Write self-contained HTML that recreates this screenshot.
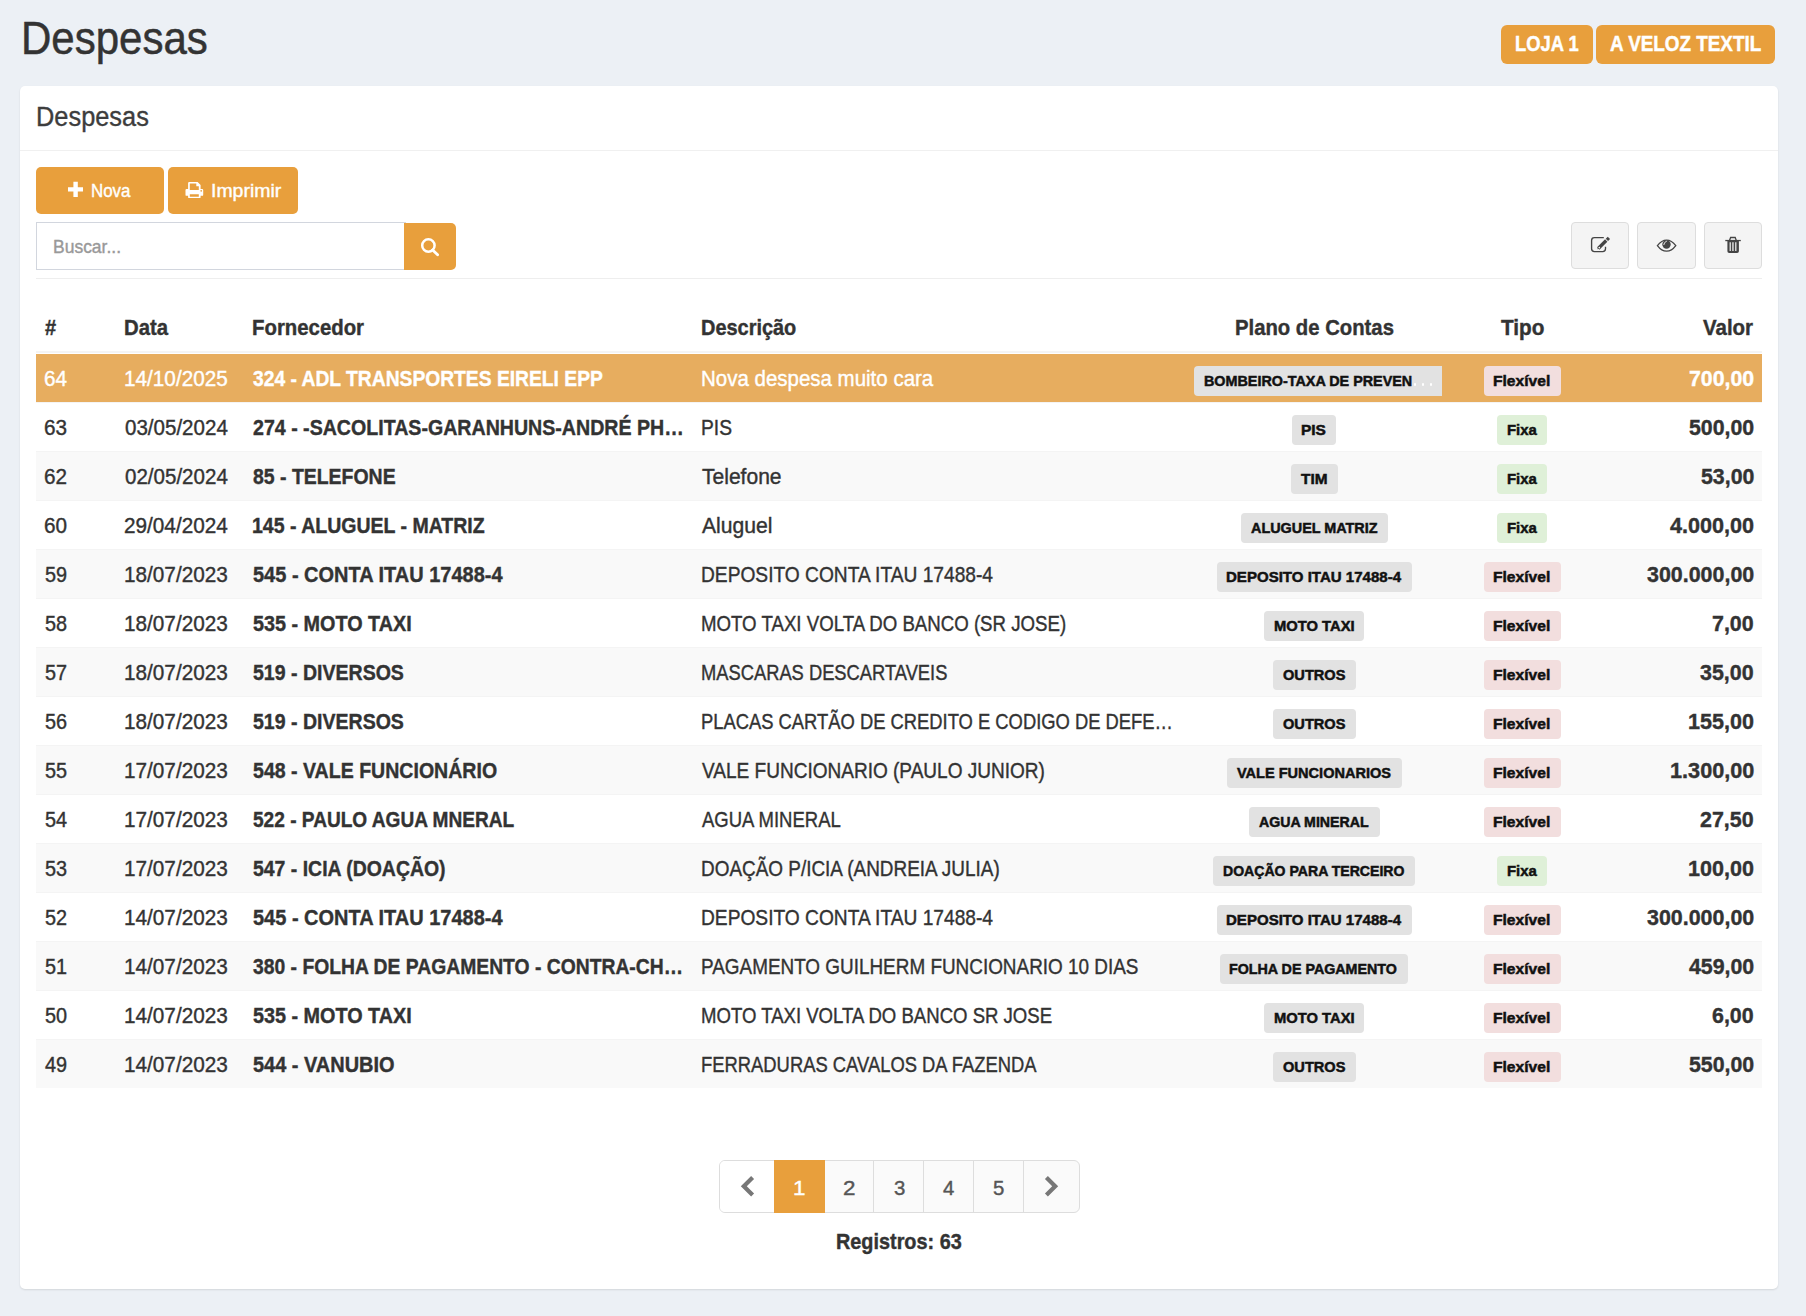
<!DOCTYPE html><html><head><meta charset="utf-8"><style>
html,body{margin:0;padding:0;}
body{width:1806px;height:1316px;background:#ecf0f5;position:relative;overflow:hidden;font-family:"Liberation Sans",sans-serif;}
.t{position:absolute;white-space:nowrap;transform-origin:0 0;}
.abs{position:absolute;}
</style></head><body>
<div class="t" style="left:20.94px;top:16.11px;font-size:45.7px;line-height:45.7px;font-weight:normal;color:#333;-webkit-text-stroke:0.5px #333;transform:scaleX(0.9196);">Despesas</div>
<div class="abs" style="left:1501px;top:25px;width:92px;height:39px;background:#e89f3c;border-radius:6px"></div>
<div class="abs" style="left:1596px;top:25px;width:179px;height:39px;background:#e89f3c;border-radius:6px"></div>
<div class="t" style="left:1515.36px;top:32.68px;font-size:22px;line-height:22px;font-weight:bold;color:#fff;-webkit-text-stroke:0.45px #fff;transform:scaleX(0.8352);">LOJA 1</div>
<div class="t" style="left:1609.60px;top:32.68px;font-size:22px;line-height:22px;font-weight:bold;color:#fff;-webkit-text-stroke:0.45px #fff;transform:scaleX(0.8570);">A VELOZ TEXTIL</div>
<div class="abs" style="left:20px;top:86px;width:1758px;height:1203px;background:#fff;border-radius:5px;box-shadow:0 1px 2px rgba(0,0,0,0.11)"></div>
<div class="abs" style="left:20px;top:150px;width:1758px;height:1px;background:#f0f0f0"></div>
<div class="t" style="left:36.32px;top:103.64px;font-size:27px;line-height:27px;font-weight:normal;color:#3d3d3d;-webkit-text-stroke:0.35px #3d3d3d;transform:scaleX(0.9399);">Despesas</div>
<div class="abs" style="left:36px;top:167px;width:128px;height:47px;background:#e89f3c;border-radius:5px"></div>
<div class="abs" style="left:168px;top:167px;width:130px;height:47px;background:#e89f3c;border-radius:5px"></div>
<svg class="abs" style="left:60px;top:175px" width="30" height="30"><path d="M13.4 6.8h4.4v5.5h5.2v4.1h-5.2v5.5h-4.4v-5.5H8v-4.1h5.4z" fill="#fff"/></svg>
<div class="t" style="left:91.09px;top:182.34px;font-size:18.5px;line-height:18.5px;font-weight:normal;color:#fff;-webkit-text-stroke:0.4px #fff;transform:scaleX(0.9138);">Nova</div>
<svg class="abs" style="left:180px;top:176px" width="30" height="30"><path fill="#fff" fill-rule="evenodd" d="M8.1 13V7.2Q8.1 6.1 9.2 6.1H17.6L20.6 9.1V13H22.1Q23.2 13 23.2 14.1V18.9Q23.2 19.8 22.3 19.8H20.6V21.2Q20.6 22.1 19.7 22.1H9Q8.1 22.1 8.1 21.2V19.8H6.4Q5.5 19.8 5.5 18.9V14.1Q5.5 13 6.6 13zM9.8 7.4V14H18.8V10.3H16.3V7.4zM9.8 18.2V20.8H18.8V18.2z"/><circle cx="21.2" cy="14.8" r="0.85" fill="#e89f3c"/></svg>
<div class="t" style="left:211.15px;top:182.34px;font-size:18.5px;line-height:18.5px;font-weight:normal;color:#fff;-webkit-text-stroke:0.4px #fff;transform:scaleX(1.0513);">Imprimir</div>
<div class="abs" style="left:36px;top:222px;width:368px;height:46px;border:1px solid #d2d6de;background:#fff"></div>
<div class="t" style="left:53.05px;top:238.14px;font-size:18.5px;line-height:18.5px;font-weight:normal;color:#999;-webkit-text-stroke:0.4px #999;transform:scaleX(0.9451);">Buscar...</div>
<div class="abs" style="left:404px;top:223px;width:52px;height:47px;background:#e89f3c;border-radius:0 5px 5px 0"></div>
<svg class="abs" style="left:416px;top:232px" width="28" height="28"><circle cx="12.4" cy="13.5" r="6.2" fill="none" stroke="#fff" stroke-width="2.5"/><path d="M16.6 17.9l5 4.9" stroke="#fff" stroke-width="2.8" stroke-linecap="round"/></svg>
<div class="abs" style="left:1571.4px;top:222.2px;width:56.1px;height:44.9px;background:#f4f4f4;border:1px solid #ddd;border-radius:4px"></div>
<div class="abs" style="left:1637.3px;top:222.2px;width:56.3px;height:44.9px;background:#f4f4f4;border:1px solid #ddd;border-radius:4px"></div>
<div class="abs" style="left:1704.3px;top:222.2px;width:55.5px;height:44.9px;background:#f4f4f4;border:1px solid #ddd;border-radius:4px"></div>
<svg class="abs" style="left:1586px;top:230px" width="30" height="30"><path d="M17.8 7.6H8.4Q5.6 7.6 5.6 10.4V18.8Q5.6 21.6 8.4 21.6H16.7Q19.5 21.6 19.5 18.8V16.8" fill="none" stroke="#444" stroke-width="1.35"/><path d="M12.2 18.5L20.2 10.5" stroke="#444" stroke-width="3.3"/><path d="M20.9 9.8L22.9 7.8" stroke="#444" stroke-width="3.3"/><path d="M11.3 19.3l1.2-3.3 2.2 2.2z" fill="#444"/><circle cx="13.3" cy="17.6" r="0.85" fill="#f4f4f4"/></svg>
<svg class="abs" style="left:1651px;top:230px" width="30" height="30"><path d="M6.4 15.6Q10.6 10.2 15.6 10.2T24.8 15.6Q20.6 21.2 15.6 21.2T6.4 15.6z" fill="none" stroke="#444" stroke-width="1.3"/><circle cx="15.5" cy="14.5" r="4.2" fill="#444"/><path d="M12.8 14.6Q12.9 12.2 15.4 11.3" stroke="#e8e8e8" stroke-width="1" fill="none" stroke-linecap="round"/></svg>
<svg class="abs" style="left:1718px;top:230px" width="30" height="30"><path d="M7.3 9.9h15.5v1.3H7.3z" fill="#444"/><path d="M11.6 10.3l1-2.8h4.6l1 2.8" fill="none" stroke="#444" stroke-width="1.3"/><path d="M9.4 11h11.5v10.3q0 1.8-1.8 1.8H11.2q-1.8 0-1.8-1.8z M11.6 12.2v8.8h1.2v-8.8z M14.3 12.2v8.8h1.3v-8.8z M17.2 12.2v8.8h1.2v-8.8z" fill="#444" fill-rule="evenodd"/></svg>
<div class="abs" style="left:36px;top:278px;width:1726px;height:1px;background:#eee"></div>
<div class="t" style="left:44.50px;top:317.38px;font-size:22.0px;line-height:22.0px;font-weight:bold;color:#333;-webkit-text-stroke:0.4px #333;transform:scaleX(0.9083);">#</div>
<div class="t" style="left:123.98px;top:317.38px;font-size:22.0px;line-height:22.0px;font-weight:bold;color:#333;-webkit-text-stroke:0.4px #333;transform:scaleX(0.9231);">Data</div>
<div class="t" style="left:252.07px;top:317.38px;font-size:22.0px;line-height:22.0px;font-weight:bold;color:#333;-webkit-text-stroke:0.4px #333;transform:scaleX(0.9256);">Fornecedor</div>
<div class="t" style="left:700.89px;top:317.38px;font-size:22.0px;line-height:22.0px;font-weight:bold;color:#333;-webkit-text-stroke:0.4px #333;transform:scaleX(0.9061);">Descrição</div>
<div class="t" style="left:1234.88px;top:317.38px;font-size:22.0px;line-height:22.0px;font-weight:bold;color:#333;-webkit-text-stroke:0.4px #333;transform:scaleX(0.9221);">Plano de Contas</div>
<div class="t" style="left:1500.80px;top:317.38px;font-size:22.0px;line-height:22.0px;font-weight:bold;color:#333;-webkit-text-stroke:0.4px #333;transform:scaleX(0.9432);">Tipo</div>
<div class="t" style="left:1703.30px;top:317.38px;font-size:22.0px;line-height:22.0px;font-weight:bold;color:#333;-webkit-text-stroke:0.4px #333;transform:scaleX(0.9309);">Valor</div>
<div class="abs" style="left:36px;top:351px;width:1726px;height:2px;background:#f4f4f4"></div>
<div class="abs" style="left:36px;top:354px;width:1726px;height:48px;background:#e7ad5f"></div>
<div class="t" style="left:43.86px;top:368.28px;font-size:22.0px;line-height:22.0px;font-weight:normal;color:#fff;-webkit-text-stroke:0.4px #fff;transform:scaleX(0.9412);">64</div>
<div class="t" style="left:124.46px;top:368.28px;font-size:22.0px;line-height:22.0px;font-weight:normal;color:#fff;-webkit-text-stroke:0.4px #fff;transform:scaleX(0.9425);">14/10/2025</div>
<div class="t" style="left:252.50px;top:368.28px;font-size:22.0px;line-height:22.0px;font-weight:bold;color:#fff;-webkit-text-stroke:0.4px #fff;transform:scaleX(0.8751);">324 - ADL TRANSPORTES EIRELI EPP</div>
<div class="t" style="left:700.57px;top:368.28px;font-size:22.0px;line-height:22.0px;font-weight:normal;color:#fff;-webkit-text-stroke:0.4px #fff;transform:scaleX(0.9309);">Nova despesa muito cara</div>
<div class="abs" style="left:1194px;top:366px;width:248px;height:30px;background:#e2e2e2;border-radius:4px 0 0 4px"></div>
<div class="t" style="left:1204.04px;top:372.80px;font-size:15.0px;line-height:15.0px;font-weight:bold;color:#111;-webkit-text-stroke:0.5px #111;transform:scaleX(0.9573);">BOMBEIRO-TAXA DE PREVEN</div>
<div class="abs" style="left:1413.5px;top:383px;width:2.8px;height:2.8px;border-radius:1.4px;background:#fff"></div><div class="abs" style="left:1421.5px;top:383px;width:2.8px;height:2.8px;border-radius:1.4px;background:#fff"></div><div class="abs" style="left:1429.5px;top:383px;width:2.8px;height:2.8px;border-radius:1.4px;background:#fff"></div>
<div class="abs" style="left:1484.05px;top:366px;width:76.50px;height:30px;background:#f2dede;border-radius:4px"></div>
<div class="t" style="left:1493.26px;top:372.80px;font-size:15.0px;line-height:15.0px;font-weight:bold;color:#111;-webkit-text-stroke:0.5px #111;transform:scaleX(1.0396);">Flexível</div>
<div class="t" style="left:1688.80px;top:368.28px;font-size:22.0px;line-height:22.0px;font-weight:bold;color:#fff;-webkit-text-stroke:0.4px #fff;transform:scaleX(0.9679);">700,00</div>
<div class="abs" style="left:36px;top:402px;width:1726px;height:1px;background:#f4f4f4"></div>
<div class="abs" style="left:36px;top:403px;width:1726px;height:48px;background:#fff"></div>
<div class="t" style="left:43.86px;top:417.28px;font-size:22.0px;line-height:22.0px;font-weight:normal;color:#333;-webkit-text-stroke:0.4px #333;transform:scaleX(0.9412);">63</div>
<div class="t" style="left:125.40px;top:417.28px;font-size:22.0px;line-height:22.0px;font-weight:normal;color:#333;-webkit-text-stroke:0.4px #333;transform:scaleX(0.9339);">03/05/2024</div>
<div class="t" style="left:252.50px;top:417.28px;font-size:22.0px;line-height:22.0px;font-weight:bold;color:#333;-webkit-text-stroke:0.4px #333;transform:scaleX(0.8908);">274 - -SACOLITAS-GARANHUNS-ANDRÉ PH…</div>
<div class="t" style="left:700.63px;top:417.28px;font-size:22.0px;line-height:22.0px;font-weight:normal;color:#333;-webkit-text-stroke:0.4px #333;transform:scaleX(0.8731);">PIS</div>
<div class="abs" style="left:1292.10px;top:415px;width:44.40px;height:30px;background:#e2e2e2;border-radius:4px"></div>
<div class="t" style="left:1301.32px;top:421.80px;font-size:15.0px;line-height:15.0px;font-weight:bold;color:#111;-webkit-text-stroke:0.5px #111;transform:scaleX(1.0314);">PIS</div>
<div class="abs" style="left:1497.30px;top:415px;width:50.00px;height:30px;background:#dff0d8;border-radius:4px"></div>
<div class="t" style="left:1506.56px;top:421.80px;font-size:15.0px;line-height:15.0px;font-weight:bold;color:#111;-webkit-text-stroke:0.5px #111;transform:scaleX(0.9942);">Fixa</div>
<div class="t" style="left:1688.80px;top:417.28px;font-size:22.0px;line-height:22.0px;font-weight:bold;color:#333;-webkit-text-stroke:0.4px #333;transform:scaleX(0.9679);">500,00</div>
<div class="abs" style="left:36px;top:451px;width:1726px;height:1px;background:#f4f4f4"></div>
<div class="abs" style="left:36px;top:452px;width:1726px;height:48px;background:#f9f9f9"></div>
<div class="t" style="left:43.86px;top:466.28px;font-size:22.0px;line-height:22.0px;font-weight:normal;color:#333;-webkit-text-stroke:0.4px #333;transform:scaleX(0.9412);">62</div>
<div class="t" style="left:125.40px;top:466.28px;font-size:22.0px;line-height:22.0px;font-weight:normal;color:#333;-webkit-text-stroke:0.4px #333;transform:scaleX(0.9339);">02/05/2024</div>
<div class="t" style="left:252.50px;top:466.28px;font-size:22.0px;line-height:22.0px;font-weight:bold;color:#333;-webkit-text-stroke:0.4px #333;transform:scaleX(0.8837);">85 - TELEFONE</div>
<div class="t" style="left:701.50px;top:466.28px;font-size:22.0px;line-height:22.0px;font-weight:normal;color:#333;-webkit-text-stroke:0.4px #333;transform:scaleX(0.9561);">Telefone</div>
<div class="abs" style="left:1291.05px;top:464px;width:46.50px;height:30px;background:#e2e2e2;border-radius:4px"></div>
<div class="t" style="left:1301.30px;top:470.80px;font-size:15.0px;line-height:15.0px;font-weight:bold;color:#111;-webkit-text-stroke:0.5px #111;transform:scaleX(1.0264);">TIM</div>
<div class="abs" style="left:1497.30px;top:464px;width:50.00px;height:30px;background:#dff0d8;border-radius:4px"></div>
<div class="t" style="left:1506.56px;top:470.80px;font-size:15.0px;line-height:15.0px;font-weight:bold;color:#111;-webkit-text-stroke:0.5px #111;transform:scaleX(0.9942);">Fixa</div>
<div class="t" style="left:1700.60px;top:466.28px;font-size:22.0px;line-height:22.0px;font-weight:bold;color:#333;-webkit-text-stroke:0.4px #333;transform:scaleX(0.9687);">53,00</div>
<div class="abs" style="left:36px;top:500px;width:1726px;height:1px;background:#f4f4f4"></div>
<div class="abs" style="left:36px;top:501px;width:1726px;height:48px;background:#fff"></div>
<div class="t" style="left:43.86px;top:515.28px;font-size:22.0px;line-height:22.0px;font-weight:normal;color:#333;-webkit-text-stroke:0.4px #333;transform:scaleX(0.9412);">60</div>
<div class="t" style="left:124.46px;top:515.28px;font-size:22.0px;line-height:22.0px;font-weight:normal;color:#333;-webkit-text-stroke:0.4px #333;transform:scaleX(0.9425);">29/04/2024</div>
<div class="t" style="left:251.61px;top:515.28px;font-size:22.0px;line-height:22.0px;font-weight:bold;color:#333;-webkit-text-stroke:0.4px #333;transform:scaleX(0.8869);">145 - ALUGUEL - MATRIZ</div>
<div class="t" style="left:701.50px;top:515.28px;font-size:22.0px;line-height:22.0px;font-weight:normal;color:#333;-webkit-text-stroke:0.4px #333;transform:scaleX(0.9613);">Aluguel</div>
<div class="abs" style="left:1240.75px;top:513px;width:147.10px;height:30px;background:#e2e2e2;border-radius:4px"></div>
<div class="t" style="left:1251.00px;top:519.80px;font-size:15.0px;line-height:15.0px;font-weight:bold;color:#111;-webkit-text-stroke:0.5px #111;transform:scaleX(0.9588);">ALUGUEL MATRIZ</div>
<div class="abs" style="left:1497.30px;top:513px;width:50.00px;height:30px;background:#dff0d8;border-radius:4px"></div>
<div class="t" style="left:1506.56px;top:519.80px;font-size:15.0px;line-height:15.0px;font-weight:bold;color:#111;-webkit-text-stroke:0.5px #111;transform:scaleX(0.9942);">Fixa</div>
<div class="t" style="left:1669.80px;top:515.28px;font-size:22.0px;line-height:22.0px;font-weight:bold;color:#333;-webkit-text-stroke:0.4px #333;transform:scaleX(0.9824);">4.000,00</div>
<div class="abs" style="left:36px;top:549px;width:1726px;height:1px;background:#f4f4f4"></div>
<div class="abs" style="left:36px;top:550px;width:1726px;height:48px;background:#f9f9f9"></div>
<div class="t" style="left:44.80px;top:564.28px;font-size:22.0px;line-height:22.0px;font-weight:normal;color:#333;-webkit-text-stroke:0.4px #333;transform:scaleX(0.9023);">59</div>
<div class="t" style="left:124.46px;top:564.28px;font-size:22.0px;line-height:22.0px;font-weight:normal;color:#333;-webkit-text-stroke:0.4px #333;transform:scaleX(0.9425);">18/07/2023</div>
<div class="t" style="left:252.50px;top:564.28px;font-size:22.0px;line-height:22.0px;font-weight:bold;color:#333;-webkit-text-stroke:0.4px #333;transform:scaleX(0.9086);">545 - CONTA ITAU 17488-4</div>
<div class="t" style="left:700.63px;top:564.28px;font-size:22.0px;line-height:22.0px;font-weight:normal;color:#333;-webkit-text-stroke:0.4px #333;transform:scaleX(0.8717);">DEPOSITO CONTA ITAU 17488-4</div>
<div class="abs" style="left:1216.70px;top:562px;width:195.20px;height:30px;background:#e2e2e2;border-radius:4px"></div>
<div class="t" style="left:1225.95px;top:568.80px;font-size:15.0px;line-height:15.0px;font-weight:bold;color:#111;-webkit-text-stroke:0.5px #111;transform:scaleX(1.0031);">DEPOSITO ITAU 17488-4</div>
<div class="abs" style="left:1484.05px;top:562px;width:76.50px;height:30px;background:#f2dede;border-radius:4px"></div>
<div class="t" style="left:1493.26px;top:568.80px;font-size:15.0px;line-height:15.0px;font-weight:bold;color:#111;-webkit-text-stroke:0.5px #111;transform:scaleX(1.0396);">Flexível</div>
<div class="t" style="left:1646.70px;top:564.28px;font-size:22.0px;line-height:22.0px;font-weight:bold;color:#333;-webkit-text-stroke:0.4px #333;transform:scaleX(0.9739);">300.000,00</div>
<div class="abs" style="left:36px;top:598px;width:1726px;height:1px;background:#f4f4f4"></div>
<div class="abs" style="left:36px;top:599px;width:1726px;height:48px;background:#fff"></div>
<div class="t" style="left:44.80px;top:613.28px;font-size:22.0px;line-height:22.0px;font-weight:normal;color:#333;-webkit-text-stroke:0.4px #333;transform:scaleX(0.9023);">58</div>
<div class="t" style="left:124.46px;top:613.28px;font-size:22.0px;line-height:22.0px;font-weight:normal;color:#333;-webkit-text-stroke:0.4px #333;transform:scaleX(0.9425);">18/07/2023</div>
<div class="t" style="left:252.50px;top:613.28px;font-size:22.0px;line-height:22.0px;font-weight:bold;color:#333;-webkit-text-stroke:0.4px #333;transform:scaleX(0.8995);">535 - MOTO TAXI</div>
<div class="t" style="left:700.65px;top:613.28px;font-size:22.0px;line-height:22.0px;font-weight:normal;color:#333;-webkit-text-stroke:0.4px #333;transform:scaleX(0.8477);">MOTO TAXI VOLTA DO BANCO (SR JOSE)</div>
<div class="abs" style="left:1264.30px;top:611px;width:100.00px;height:30px;background:#e2e2e2;border-radius:4px"></div>
<div class="t" style="left:1273.57px;top:617.80px;font-size:15.0px;line-height:15.0px;font-weight:bold;color:#111;-webkit-text-stroke:0.5px #111;transform:scaleX(0.9842);">MOTO TAXI</div>
<div class="abs" style="left:1484.05px;top:611px;width:76.50px;height:30px;background:#f2dede;border-radius:4px"></div>
<div class="t" style="left:1493.26px;top:617.80px;font-size:15.0px;line-height:15.0px;font-weight:bold;color:#111;-webkit-text-stroke:0.5px #111;transform:scaleX(1.0396);">Flexível</div>
<div class="t" style="left:1712.30px;top:613.28px;font-size:22.0px;line-height:22.0px;font-weight:bold;color:#333;-webkit-text-stroke:0.4px #333;transform:scaleX(0.9722);">7,00</div>
<div class="abs" style="left:36px;top:647px;width:1726px;height:1px;background:#f4f4f4"></div>
<div class="abs" style="left:36px;top:648px;width:1726px;height:48px;background:#f9f9f9"></div>
<div class="t" style="left:44.80px;top:662.28px;font-size:22.0px;line-height:22.0px;font-weight:normal;color:#333;-webkit-text-stroke:0.4px #333;transform:scaleX(0.9023);">57</div>
<div class="t" style="left:124.46px;top:662.28px;font-size:22.0px;line-height:22.0px;font-weight:normal;color:#333;-webkit-text-stroke:0.4px #333;transform:scaleX(0.9425);">18/07/2023</div>
<div class="t" style="left:252.50px;top:662.28px;font-size:22.0px;line-height:22.0px;font-weight:bold;color:#333;-webkit-text-stroke:0.4px #333;transform:scaleX(0.8879);">519 - DIVERSOS</div>
<div class="t" style="left:700.67px;top:662.28px;font-size:22.0px;line-height:22.0px;font-weight:normal;color:#333;-webkit-text-stroke:0.4px #333;transform:scaleX(0.8328);">MASCARAS DESCARTAVEIS</div>
<div class="abs" style="left:1272.85px;top:660px;width:82.90px;height:30px;background:#e2e2e2;border-radius:4px"></div>
<div class="t" style="left:1283.10px;top:666.80px;font-size:15.0px;line-height:15.0px;font-weight:bold;color:#111;-webkit-text-stroke:0.5px #111;transform:scaleX(0.9725);">OUTROS</div>
<div class="abs" style="left:1484.05px;top:660px;width:76.50px;height:30px;background:#f2dede;border-radius:4px"></div>
<div class="t" style="left:1493.26px;top:666.80px;font-size:15.0px;line-height:15.0px;font-weight:bold;color:#111;-webkit-text-stroke:0.5px #111;transform:scaleX(1.0396);">Flexível</div>
<div class="t" style="left:1700.30px;top:662.28px;font-size:22.0px;line-height:22.0px;font-weight:bold;color:#333;-webkit-text-stroke:0.4px #333;transform:scaleX(0.9741);">35,00</div>
<div class="abs" style="left:36px;top:696px;width:1726px;height:1px;background:#f4f4f4"></div>
<div class="abs" style="left:36px;top:697px;width:1726px;height:48px;background:#fff"></div>
<div class="t" style="left:44.80px;top:711.28px;font-size:22.0px;line-height:22.0px;font-weight:normal;color:#333;-webkit-text-stroke:0.4px #333;transform:scaleX(0.9023);">56</div>
<div class="t" style="left:124.46px;top:711.28px;font-size:22.0px;line-height:22.0px;font-weight:normal;color:#333;-webkit-text-stroke:0.4px #333;transform:scaleX(0.9425);">18/07/2023</div>
<div class="t" style="left:252.50px;top:711.28px;font-size:22.0px;line-height:22.0px;font-weight:bold;color:#333;-webkit-text-stroke:0.4px #333;transform:scaleX(0.8879);">519 - DIVERSOS</div>
<div class="t" style="left:700.67px;top:711.28px;font-size:22.0px;line-height:22.0px;font-weight:normal;color:#333;-webkit-text-stroke:0.4px #333;transform:scaleX(0.8350);">PLACAS CARTÃO DE CREDITO E CODIGO DE DEFE…</div>
<div class="abs" style="left:1272.85px;top:709px;width:82.90px;height:30px;background:#e2e2e2;border-radius:4px"></div>
<div class="t" style="left:1283.10px;top:715.80px;font-size:15.0px;line-height:15.0px;font-weight:bold;color:#111;-webkit-text-stroke:0.5px #111;transform:scaleX(0.9725);">OUTROS</div>
<div class="abs" style="left:1484.05px;top:709px;width:76.50px;height:30px;background:#f2dede;border-radius:4px"></div>
<div class="t" style="left:1493.26px;top:715.80px;font-size:15.0px;line-height:15.0px;font-weight:bold;color:#111;-webkit-text-stroke:0.5px #111;transform:scaleX(1.0396);">Flexível</div>
<div class="t" style="left:1688.02px;top:711.28px;font-size:22.0px;line-height:22.0px;font-weight:bold;color:#333;-webkit-text-stroke:0.4px #333;transform:scaleX(0.9795);">155,00</div>
<div class="abs" style="left:36px;top:745px;width:1726px;height:1px;background:#f4f4f4"></div>
<div class="abs" style="left:36px;top:746px;width:1726px;height:48px;background:#f9f9f9"></div>
<div class="t" style="left:44.80px;top:760.28px;font-size:22.0px;line-height:22.0px;font-weight:normal;color:#333;-webkit-text-stroke:0.4px #333;transform:scaleX(0.9023);">55</div>
<div class="t" style="left:124.46px;top:760.28px;font-size:22.0px;line-height:22.0px;font-weight:normal;color:#333;-webkit-text-stroke:0.4px #333;transform:scaleX(0.9425);">17/07/2023</div>
<div class="t" style="left:252.50px;top:760.28px;font-size:22.0px;line-height:22.0px;font-weight:bold;color:#333;-webkit-text-stroke:0.4px #333;transform:scaleX(0.8889);">548 - VALE FUNCIONÁRIO</div>
<div class="t" style="left:701.50px;top:760.28px;font-size:22.0px;line-height:22.0px;font-weight:normal;color:#333;-webkit-text-stroke:0.4px #333;transform:scaleX(0.8650);">VALE FUNCIONARIO (PAULO JUNIOR)</div>
<div class="abs" style="left:1227.05px;top:758px;width:174.50px;height:30px;background:#e2e2e2;border-radius:4px"></div>
<div class="t" style="left:1237.30px;top:764.80px;font-size:15.0px;line-height:15.0px;font-weight:bold;color:#111;-webkit-text-stroke:0.5px #111;transform:scaleX(0.9692);">VALE FUNCIONARIOS</div>
<div class="abs" style="left:1484.05px;top:758px;width:76.50px;height:30px;background:#f2dede;border-radius:4px"></div>
<div class="t" style="left:1493.26px;top:764.80px;font-size:15.0px;line-height:15.0px;font-weight:bold;color:#111;-webkit-text-stroke:0.5px #111;transform:scaleX(1.0396);">Flexível</div>
<div class="t" style="left:1669.51px;top:760.28px;font-size:22.0px;line-height:22.0px;font-weight:bold;color:#333;-webkit-text-stroke:0.4px #333;transform:scaleX(0.9858);">1.300,00</div>
<div class="abs" style="left:36px;top:794px;width:1726px;height:1px;background:#f4f4f4"></div>
<div class="abs" style="left:36px;top:795px;width:1726px;height:48px;background:#fff"></div>
<div class="t" style="left:44.80px;top:809.28px;font-size:22.0px;line-height:22.0px;font-weight:normal;color:#333;-webkit-text-stroke:0.4px #333;transform:scaleX(0.9023);">54</div>
<div class="t" style="left:124.46px;top:809.28px;font-size:22.0px;line-height:22.0px;font-weight:normal;color:#333;-webkit-text-stroke:0.4px #333;transform:scaleX(0.9425);">17/07/2023</div>
<div class="t" style="left:252.50px;top:809.28px;font-size:22.0px;line-height:22.0px;font-weight:bold;color:#333;-webkit-text-stroke:0.4px #333;transform:scaleX(0.8677);">522 - PAULO AGUA MNERAL</div>
<div class="t" style="left:701.50px;top:809.28px;font-size:22.0px;line-height:22.0px;font-weight:normal;color:#333;-webkit-text-stroke:0.4px #333;transform:scaleX(0.8409);">AGUA MINERAL</div>
<div class="abs" style="left:1249.05px;top:807px;width:130.50px;height:30px;background:#e2e2e2;border-radius:4px"></div>
<div class="t" style="left:1259.30px;top:813.80px;font-size:15.0px;line-height:15.0px;font-weight:bold;color:#111;-webkit-text-stroke:0.5px #111;transform:scaleX(0.9442);">AGUA MINERAL</div>
<div class="abs" style="left:1484.05px;top:807px;width:76.50px;height:30px;background:#f2dede;border-radius:4px"></div>
<div class="t" style="left:1493.26px;top:813.80px;font-size:15.0px;line-height:15.0px;font-weight:bold;color:#111;-webkit-text-stroke:0.5px #111;transform:scaleX(1.0396);">Flexível</div>
<div class="t" style="left:1700.30px;top:809.28px;font-size:22.0px;line-height:22.0px;font-weight:bold;color:#333;-webkit-text-stroke:0.4px #333;transform:scaleX(0.9741);">27,50</div>
<div class="abs" style="left:36px;top:843px;width:1726px;height:1px;background:#f4f4f4"></div>
<div class="abs" style="left:36px;top:844px;width:1726px;height:48px;background:#f9f9f9"></div>
<div class="t" style="left:44.80px;top:858.28px;font-size:22.0px;line-height:22.0px;font-weight:normal;color:#333;-webkit-text-stroke:0.4px #333;transform:scaleX(0.9023);">53</div>
<div class="t" style="left:124.46px;top:858.28px;font-size:22.0px;line-height:22.0px;font-weight:normal;color:#333;-webkit-text-stroke:0.4px #333;transform:scaleX(0.9425);">17/07/2023</div>
<div class="t" style="left:252.50px;top:858.28px;font-size:22.0px;line-height:22.0px;font-weight:bold;color:#333;-webkit-text-stroke:0.4px #333;transform:scaleX(0.8834);">547 - ICIA (DOAÇÃO)</div>
<div class="t" style="left:700.64px;top:858.28px;font-size:22.0px;line-height:22.0px;font-weight:normal;color:#333;-webkit-text-stroke:0.4px #333;transform:scaleX(0.8604);">DOAÇÃO P/ICIA (ANDREIA JULIA)</div>
<div class="abs" style="left:1213.40px;top:856px;width:201.80px;height:30px;background:#e2e2e2;border-radius:4px"></div>
<div class="t" style="left:1222.71px;top:862.80px;font-size:15.0px;line-height:15.0px;font-weight:bold;color:#111;-webkit-text-stroke:0.5px #111;transform:scaleX(0.9383);">DOAÇÃO PARA TERCEIRO</div>
<div class="abs" style="left:1497.30px;top:856px;width:50.00px;height:30px;background:#dff0d8;border-radius:4px"></div>
<div class="t" style="left:1506.56px;top:862.80px;font-size:15.0px;line-height:15.0px;font-weight:bold;color:#111;-webkit-text-stroke:0.5px #111;transform:scaleX(0.9942);">Fixa</div>
<div class="t" style="left:1688.02px;top:858.28px;font-size:22.0px;line-height:22.0px;font-weight:bold;color:#333;-webkit-text-stroke:0.4px #333;transform:scaleX(0.9795);">100,00</div>
<div class="abs" style="left:36px;top:892px;width:1726px;height:1px;background:#f4f4f4"></div>
<div class="abs" style="left:36px;top:893px;width:1726px;height:48px;background:#fff"></div>
<div class="t" style="left:44.80px;top:907.28px;font-size:22.0px;line-height:22.0px;font-weight:normal;color:#333;-webkit-text-stroke:0.4px #333;transform:scaleX(0.9023);">52</div>
<div class="t" style="left:124.46px;top:907.28px;font-size:22.0px;line-height:22.0px;font-weight:normal;color:#333;-webkit-text-stroke:0.4px #333;transform:scaleX(0.9425);">14/07/2023</div>
<div class="t" style="left:252.50px;top:907.28px;font-size:22.0px;line-height:22.0px;font-weight:bold;color:#333;-webkit-text-stroke:0.4px #333;transform:scaleX(0.9086);">545 - CONTA ITAU 17488-4</div>
<div class="t" style="left:700.63px;top:907.28px;font-size:22.0px;line-height:22.0px;font-weight:normal;color:#333;-webkit-text-stroke:0.4px #333;transform:scaleX(0.8717);">DEPOSITO CONTA ITAU 17488-4</div>
<div class="abs" style="left:1216.70px;top:905px;width:195.20px;height:30px;background:#e2e2e2;border-radius:4px"></div>
<div class="t" style="left:1225.95px;top:911.80px;font-size:15.0px;line-height:15.0px;font-weight:bold;color:#111;-webkit-text-stroke:0.5px #111;transform:scaleX(1.0031);">DEPOSITO ITAU 17488-4</div>
<div class="abs" style="left:1484.05px;top:905px;width:76.50px;height:30px;background:#f2dede;border-radius:4px"></div>
<div class="t" style="left:1493.26px;top:911.80px;font-size:15.0px;line-height:15.0px;font-weight:bold;color:#111;-webkit-text-stroke:0.5px #111;transform:scaleX(1.0396);">Flexível</div>
<div class="t" style="left:1646.70px;top:907.28px;font-size:22.0px;line-height:22.0px;font-weight:bold;color:#333;-webkit-text-stroke:0.4px #333;transform:scaleX(0.9739);">300.000,00</div>
<div class="abs" style="left:36px;top:941px;width:1726px;height:1px;background:#f4f4f4"></div>
<div class="abs" style="left:36px;top:942px;width:1726px;height:48px;background:#f9f9f9"></div>
<div class="t" style="left:44.80px;top:956.28px;font-size:22.0px;line-height:22.0px;font-weight:normal;color:#333;-webkit-text-stroke:0.4px #333;transform:scaleX(0.9023);">51</div>
<div class="t" style="left:124.46px;top:956.28px;font-size:22.0px;line-height:22.0px;font-weight:normal;color:#333;-webkit-text-stroke:0.4px #333;transform:scaleX(0.9425);">14/07/2023</div>
<div class="t" style="left:252.50px;top:956.28px;font-size:22.0px;line-height:22.0px;font-weight:bold;color:#333;-webkit-text-stroke:0.4px #333;transform:scaleX(0.8781);">380 - FOLHA DE PAGAMENTO - CONTRA-CH…</div>
<div class="t" style="left:700.64px;top:956.28px;font-size:22.0px;line-height:22.0px;font-weight:normal;color:#333;-webkit-text-stroke:0.4px #333;transform:scaleX(0.8595);">PAGAMENTO GUILHERM FUNCIONARIO 10 DIAS</div>
<div class="abs" style="left:1220.15px;top:954px;width:188.30px;height:30px;background:#e2e2e2;border-radius:4px"></div>
<div class="t" style="left:1229.45px;top:960.80px;font-size:15.0px;line-height:15.0px;font-weight:bold;color:#111;-webkit-text-stroke:0.5px #111;transform:scaleX(0.9519);">FOLHA DE PAGAMENTO</div>
<div class="abs" style="left:1484.05px;top:954px;width:76.50px;height:30px;background:#f2dede;border-radius:4px"></div>
<div class="t" style="left:1493.26px;top:960.80px;font-size:15.0px;line-height:15.0px;font-weight:bold;color:#111;-webkit-text-stroke:0.5px #111;transform:scaleX(1.0396);">Flexível</div>
<div class="t" style="left:1688.70px;top:956.28px;font-size:22.0px;line-height:22.0px;font-weight:bold;color:#333;-webkit-text-stroke:0.4px #333;transform:scaleX(0.9694);">459,00</div>
<div class="abs" style="left:36px;top:990px;width:1726px;height:1px;background:#f4f4f4"></div>
<div class="abs" style="left:36px;top:991px;width:1726px;height:48px;background:#fff"></div>
<div class="t" style="left:44.80px;top:1005.28px;font-size:22.0px;line-height:22.0px;font-weight:normal;color:#333;-webkit-text-stroke:0.4px #333;transform:scaleX(0.9023);">50</div>
<div class="t" style="left:124.46px;top:1005.28px;font-size:22.0px;line-height:22.0px;font-weight:normal;color:#333;-webkit-text-stroke:0.4px #333;transform:scaleX(0.9425);">14/07/2023</div>
<div class="t" style="left:252.50px;top:1005.28px;font-size:22.0px;line-height:22.0px;font-weight:bold;color:#333;-webkit-text-stroke:0.4px #333;transform:scaleX(0.8995);">535 - MOTO TAXI</div>
<div class="t" style="left:700.66px;top:1005.28px;font-size:22.0px;line-height:22.0px;font-weight:normal;color:#333;-webkit-text-stroke:0.4px #333;transform:scaleX(0.8438);">MOTO TAXI VOLTA DO BANCO SR JOSE</div>
<div class="abs" style="left:1264.30px;top:1003px;width:100.00px;height:30px;background:#e2e2e2;border-radius:4px"></div>
<div class="t" style="left:1273.57px;top:1009.80px;font-size:15.0px;line-height:15.0px;font-weight:bold;color:#111;-webkit-text-stroke:0.5px #111;transform:scaleX(0.9842);">MOTO TAXI</div>
<div class="abs" style="left:1484.05px;top:1003px;width:76.50px;height:30px;background:#f2dede;border-radius:4px"></div>
<div class="t" style="left:1493.26px;top:1009.80px;font-size:15.0px;line-height:15.0px;font-weight:bold;color:#111;-webkit-text-stroke:0.5px #111;transform:scaleX(1.0396);">Flexível</div>
<div class="t" style="left:1712.30px;top:1005.28px;font-size:22.0px;line-height:22.0px;font-weight:bold;color:#333;-webkit-text-stroke:0.4px #333;transform:scaleX(0.9722);">6,00</div>
<div class="abs" style="left:36px;top:1039px;width:1726px;height:1px;background:#f4f4f4"></div>
<div class="abs" style="left:36px;top:1040px;width:1726px;height:48px;background:#f9f9f9"></div>
<div class="t" style="left:44.80px;top:1054.28px;font-size:22.0px;line-height:22.0px;font-weight:normal;color:#333;-webkit-text-stroke:0.4px #333;transform:scaleX(0.9023);">49</div>
<div class="t" style="left:124.46px;top:1054.28px;font-size:22.0px;line-height:22.0px;font-weight:normal;color:#333;-webkit-text-stroke:0.4px #333;transform:scaleX(0.9425);">14/07/2023</div>
<div class="t" style="left:252.50px;top:1054.28px;font-size:22.0px;line-height:22.0px;font-weight:bold;color:#333;-webkit-text-stroke:0.4px #333;transform:scaleX(0.9066);">544 - VANUBIO</div>
<div class="t" style="left:700.66px;top:1054.28px;font-size:22.0px;line-height:22.0px;font-weight:normal;color:#333;-webkit-text-stroke:0.4px #333;transform:scaleX(0.8360);">FERRADURAS CAVALOS DA FAZENDA</div>
<div class="abs" style="left:1272.85px;top:1052px;width:82.90px;height:30px;background:#e2e2e2;border-radius:4px"></div>
<div class="t" style="left:1283.10px;top:1058.80px;font-size:15.0px;line-height:15.0px;font-weight:bold;color:#111;-webkit-text-stroke:0.5px #111;transform:scaleX(0.9725);">OUTROS</div>
<div class="abs" style="left:1484.05px;top:1052px;width:76.50px;height:30px;background:#f2dede;border-radius:4px"></div>
<div class="t" style="left:1493.26px;top:1058.80px;font-size:15.0px;line-height:15.0px;font-weight:bold;color:#111;-webkit-text-stroke:0.5px #111;transform:scaleX(1.0396);">Flexível</div>
<div class="t" style="left:1688.70px;top:1054.28px;font-size:22.0px;line-height:22.0px;font-weight:bold;color:#333;-webkit-text-stroke:0.4px #333;transform:scaleX(0.9694);">550,00</div>
<div class="abs" style="left:719px;top:1160px;width:358.5px;height:50.6px;border:1px solid #ddd;border-radius:6px;background:#fafafa;overflow:hidden"><div class="abs" style="left:0;top:0;width:54.5px;height:100%;background:#fff"></div></div>
<div class="abs" style="left:873px;top:1161px;width:1px;height:51px;background:#ddd"></div>
<div class="abs" style="left:923px;top:1161px;width:1px;height:51px;background:#ddd"></div>
<div class="abs" style="left:973px;top:1161px;width:1px;height:51px;background:#ddd"></div>
<div class="abs" style="left:1023px;top:1161px;width:1px;height:51px;background:#ddd"></div>
<div class="abs" style="left:774px;top:1160px;width:51px;height:52.6px;background:#e89f3c"></div>
<svg class="abs" style="left:730px;top:1166px" width="36" height="40"><path d="M22.6 11.5l-8.8 8.7 8.8 8.8" fill="none" stroke="#777" stroke-width="4.2"/></svg>
<svg class="abs" style="left:1033px;top:1166px" width="36" height="40"><path d="M13.4 11.5l8.8 8.7-8.8 8.8" fill="none" stroke="#777" stroke-width="4.2"/></svg>
<div class="t" style="left:792.94px;top:1177.65px;font-size:20.5px;line-height:20.5px;font-weight:normal;color:#fff;-webkit-text-stroke:0.4px #fff;transform:scaleX(1.0934);">1</div>
<div class="t" style="left:842.64px;top:1177.65px;font-size:20.5px;line-height:20.5px;font-weight:normal;color:#555;-webkit-text-stroke:0.4px #555;transform:scaleX(1.0934);">2</div>
<div class="t" style="left:893.53px;top:1177.65px;font-size:20.5px;line-height:20.5px;font-weight:normal;color:#555;-webkit-text-stroke:0.4px #555;transform:scaleX(0.9940);">3</div>
<div class="t" style="left:943.33px;top:1177.65px;font-size:20.5px;line-height:20.5px;font-weight:normal;color:#555;-webkit-text-stroke:0.4px #555;transform:scaleX(0.9940);">4</div>
<div class="t" style="left:993.13px;top:1177.65px;font-size:20.5px;line-height:20.5px;font-weight:normal;color:#555;-webkit-text-stroke:0.4px #555;transform:scaleX(0.9940);">5</div>
<div class="t" style="left:836.00px;top:1230.98px;font-size:22.0px;line-height:22.0px;font-weight:bold;color:#333;-webkit-text-stroke:0.4px #333;transform:scaleX(0.9020);">Registros: 63</div>
</body></html>
